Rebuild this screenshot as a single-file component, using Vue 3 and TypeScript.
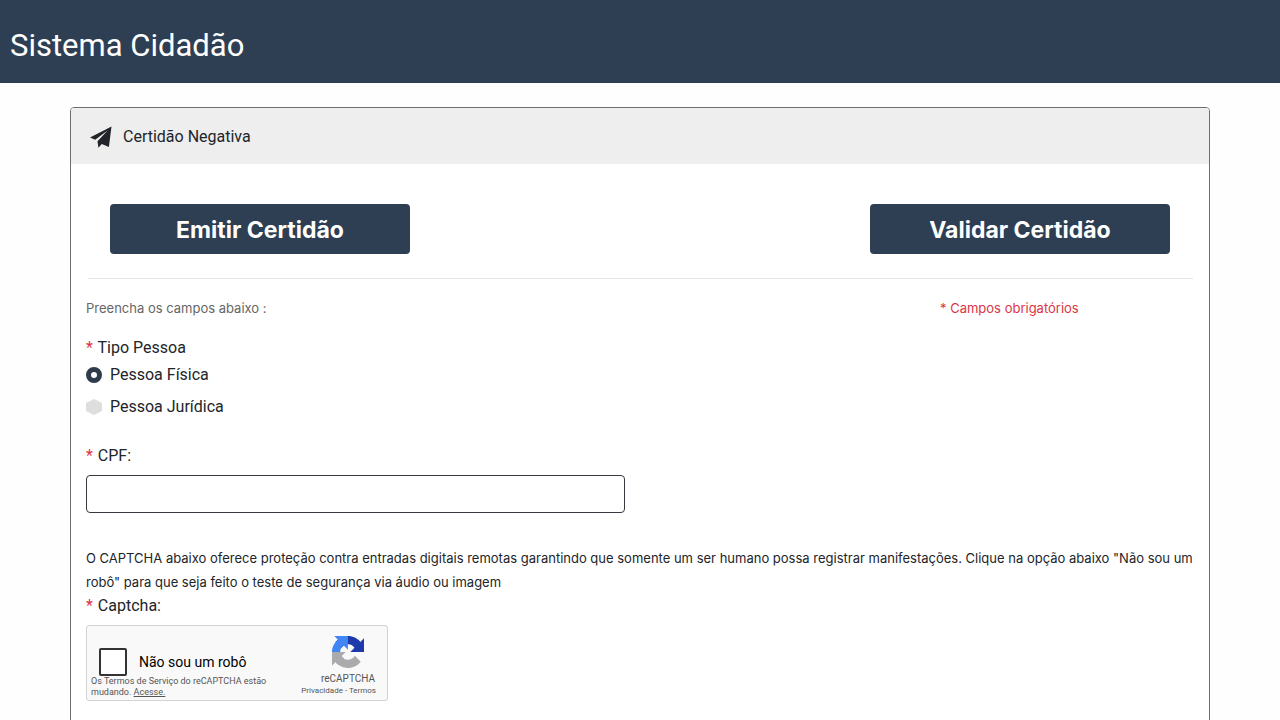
<script setup lang="ts">
import { ref } from 'vue'

type PersonType = 'fisica' | 'juridica'

const personTypes: { value: PersonType; label: string }[] = [
  { value: 'fisica', label: 'Pessoa Física' },
  { value: 'juridica', label: 'Pessoa Jurídica' },
]

const personType = ref<PersonType>('fisica')
const documentNumber = ref('')
const notRobot = ref(false)
</script>

<template>
  <div class="page">
    <header class="topbar">
      <h1>Sistema Cidadão</h1>
    </header>

    <main class="card">
      <div class="card-header">
        <svg class="plane" viewBox="0 0 22 22" aria-hidden="true">
          <path d="M21.5 0.5 0 11.4 5.2 13.7 17.6 4.4 7.5 15.2 8.4 21.8 11.8 17.9 18.9 21z" />
        </svg>
        <h2>Certidão Negativa</h2>
      </div>

      <form class="card-body" @submit.prevent>
        <div class="actions">
          <button type="button">Emitir Certidão</button>
          <button type="button">Validar Certidão</button>
        </div>
        <hr />

        <div class="hints">
          <span class="fill-hint">Preencha os campos abaixo :</span>
          <span class="required-hint">* Campos obrigatórios</span>
        </div>

        <fieldset>
          <legend><span class="star">*</span> Tipo Pessoa</legend>
          <label v-for="item in personTypes" :key="item.value" class="radio">
            <input v-model="personType" type="radio" name="tipo" :value="item.value" />
            {{ item.label }}
          </label>
        </fieldset>

        <div class="field">
          <label for="cpf"><span class="star">*</span> CPF:</label>
          <input id="cpf" v-model="documentNumber" type="text" />
        </div>

        <p class="notice">
          O CAPTCHA abaixo oferece proteção contra entradas digitais remotas garantindo que somente
          um ser humano possa registrar manifestações. Clique na opção abaixo "Não sou um robô" para
          que seja feito o teste de segurança via áudio ou imagem
        </p>
        <div class="captcha-label"><span class="star">*</span> Captcha:</div>

        <div class="captcha">
          <div class="captcha-main">
            <label class="robot">
              <input v-model="notRobot" type="checkbox" />
              Não sou um robô
            </label>
            <p class="terms">
              Os Termos de Serviço do reCAPTCHA estão mudando. <a href="#">Acesse.</a>
            </p>
          </div>
          <div class="captcha-brand">
            <svg viewBox="0 0 64 64" aria-hidden="true">
              <path fill="#1c3aa9" d="M64 31.955l-.033-1.37V4.687l-7.16 7.16C50.948 4.674 42.033.093 32.05.093c-10.4 0-19.622 4.96-25.458 12.64l11.736 11.86a15.55 15.55 0 0 1 4.754-5.334c2.05-1.6 4.952-2.906 8.968-2.906.485 0 .86.057 1.135.163 4.976.393 9.288 3.14 11.828 7.124l-8.307 8.307L64 31.953" />
              <path fill="#4285f4" d="M31.862.094l-1.37.033H4.594l7.16 7.16C4.58 13.147 0 22.06 0 32.046c0 10.4 4.96 19.622 12.64 25.458L24.5 45.768a15.55 15.55 0 0 1-5.334-4.754c-1.6-2.05-2.906-4.952-2.906-8.968 0-.485.057-.86.163-1.135.393-4.976 3.14-9.288 7.124-11.828l8.307 8.307L31.86.095" />
              <path fill="#ababab" d="M.001 32.045l.033 1.37v25.898l7.16-7.16c5.86 7.173 14.774 11.754 24.76 11.754 10.4 0 19.622-4.96 25.458-12.64l-11.736-11.86a15.55 15.55 0 0 1-4.754 5.334c-2.05 1.6-4.952 2.906-8.968 2.906-.485 0-.86-.057-1.135-.163-4.976-.393-9.288-3.14-11.828-7.124l8.307-8.307c-10.522.04-22.4.066-27.295-.005" />
            </svg>
            <span class="brand-name">reCAPTCHA</span>
            <span class="brand-links"><a href="#">Privacidade</a> - <a href="#">Termos</a></span>
          </div>
        </div>
      </form>
    </main>
  </div>
</template>

<style>
body {
  margin: 0;
  background: #fefefe;
}
</style>

<style scoped>
* {
  box-sizing: border-box;
}
.page {
  height: 100vh;
  overflow: hidden;
  font-family: Roboto, 'Liberation Sans', sans-serif;
  font-size: 16px;
  line-height: 24px;
  color: #212529;
}
.topbar {
  padding: 22px 10px 13px;
  background: #2e3f54;
  color: #fff;
}
h1 {
  margin: 0;
  font-size: 31px;
  line-height: 48px;
  font-weight: 400;
}
.card {
  width: calc(100% - 140px);
  max-width: 1140px;
  margin: 24px auto 0;
  border: 1px solid #6b6e72;
  border-radius: 4px;
  background: #fff;
  overflow: hidden;
}
.card-header {
  display: flex;
  align-items: center;
  gap: 11px;
  padding: 17px 19px 15px;
  background: #eee;
}
.plane {
  width: 22px;
  height: 22px;
  fill: #212529;
}
h2 {
  margin: 0;
  font-size: 16px;
  line-height: 24px;
  font-weight: 400;
}
.card-body {
  padding: 40px 15px;
}
.actions {
  display: flex;
  justify-content: space-between;
  padding: 0 24px;
}
.actions button {
  width: 300px;
  height: 50px;
  padding: 2px 0 0;
  border: 0;
  border-radius: 4px;
  background: #2e3f54;
  color: #fff;
  font-family: Inter, 'Liberation Sans', sans-serif;
  font-size: 23px;
  font-weight: 700;
}
hr {
  margin: 24px 1px 17px 2px;
  border: 0;
  border-top: 1px solid #e5e5e5;
}
.hints {
  display: grid;
  grid-template-columns: 854px 1fr;
}
.hints,
.notice {
  font-family: Inter, 'Liberation Sans', sans-serif;
  font-size: 13px;
}
.fill-hint {
  color: #666;
}
.required-hint,
.star {
  color: #dc3545;
}
.star {
  margin-right: 1px;
}
fieldset {
  margin: 16px 0 0;
  padding: 0;
  border: 0;
}
legend {
  padding: 0;
  margin-bottom: 3px;
}
.radio {
  display: flex;
  align-items: center;
  gap: 8px;
  margin-bottom: 8px;
}
.radio input {
  appearance: none;
  width: 16px;
  height: 16px;
  margin: 0;
  background: #dedede;
  clip-path: polygon(50% 0, 100% 25%, 100% 75%, 50% 100%, 0 75%, 0 25%);
}
.radio input:checked {
  border: 5px solid #2e3b4b;
  border-radius: 50%;
  background: #fff;
  clip-path: none;
}
.field {
  display: grid;
  gap: 7px;
  margin-top: 17px;
}
.field input {
  width: 539px;
  max-width: 100%;
  height: 38px;
  padding: 6px 12px;
  border: 1px solid #343a40;
  border-radius: 4px;
  background: #fff;
  font: inherit;
}
.notice {
  margin: 33px 0 0;
}
.captcha-label {
  margin-bottom: 7px;
}
.captcha {
  display: flex;
  justify-content: space-between;
  width: 302px;
  height: 76px;
  border: 1px solid #d3d3d3;
  border-radius: 3px;
  background: #f9f9f9;
  color: #000;
}
.captcha-main {
  width: 190px;
  padding: 22px 0 0 4px;
}
.robot {
  display: flex;
  align-items: center;
  gap: 12px;
  padding-left: 8px;
  font-size: 14px;
  line-height: 28px;
}
.robot input {
  appearance: none;
  width: 28px;
  height: 28px;
  margin: 0;
  border: 2px solid #333;
  border-radius: 2px;
  background: #fff;
}
.terms {
  margin: 0;
  font-size: 9px;
  line-height: 11px;
  color: #555;
}
.terms a {
  color: inherit;
}
.captcha-brand {
  display: flex;
  flex-direction: column;
  align-items: flex-end;
  margin-right: 11px;
  padding-top: 10px;
  color: #555;
}
.captcha-brand svg {
  width: 32px;
  height: 32px;
  margin-right: 12px;
}
.brand-name {
  margin: 5px 1px 0 0;
  font-size: 10px;
  line-height: 12px;
}
.brand-links {
  font-size: 8px;
  line-height: 12px;
}
.brand-links a {
  color: inherit;
  text-decoration: none;
}
</style>
